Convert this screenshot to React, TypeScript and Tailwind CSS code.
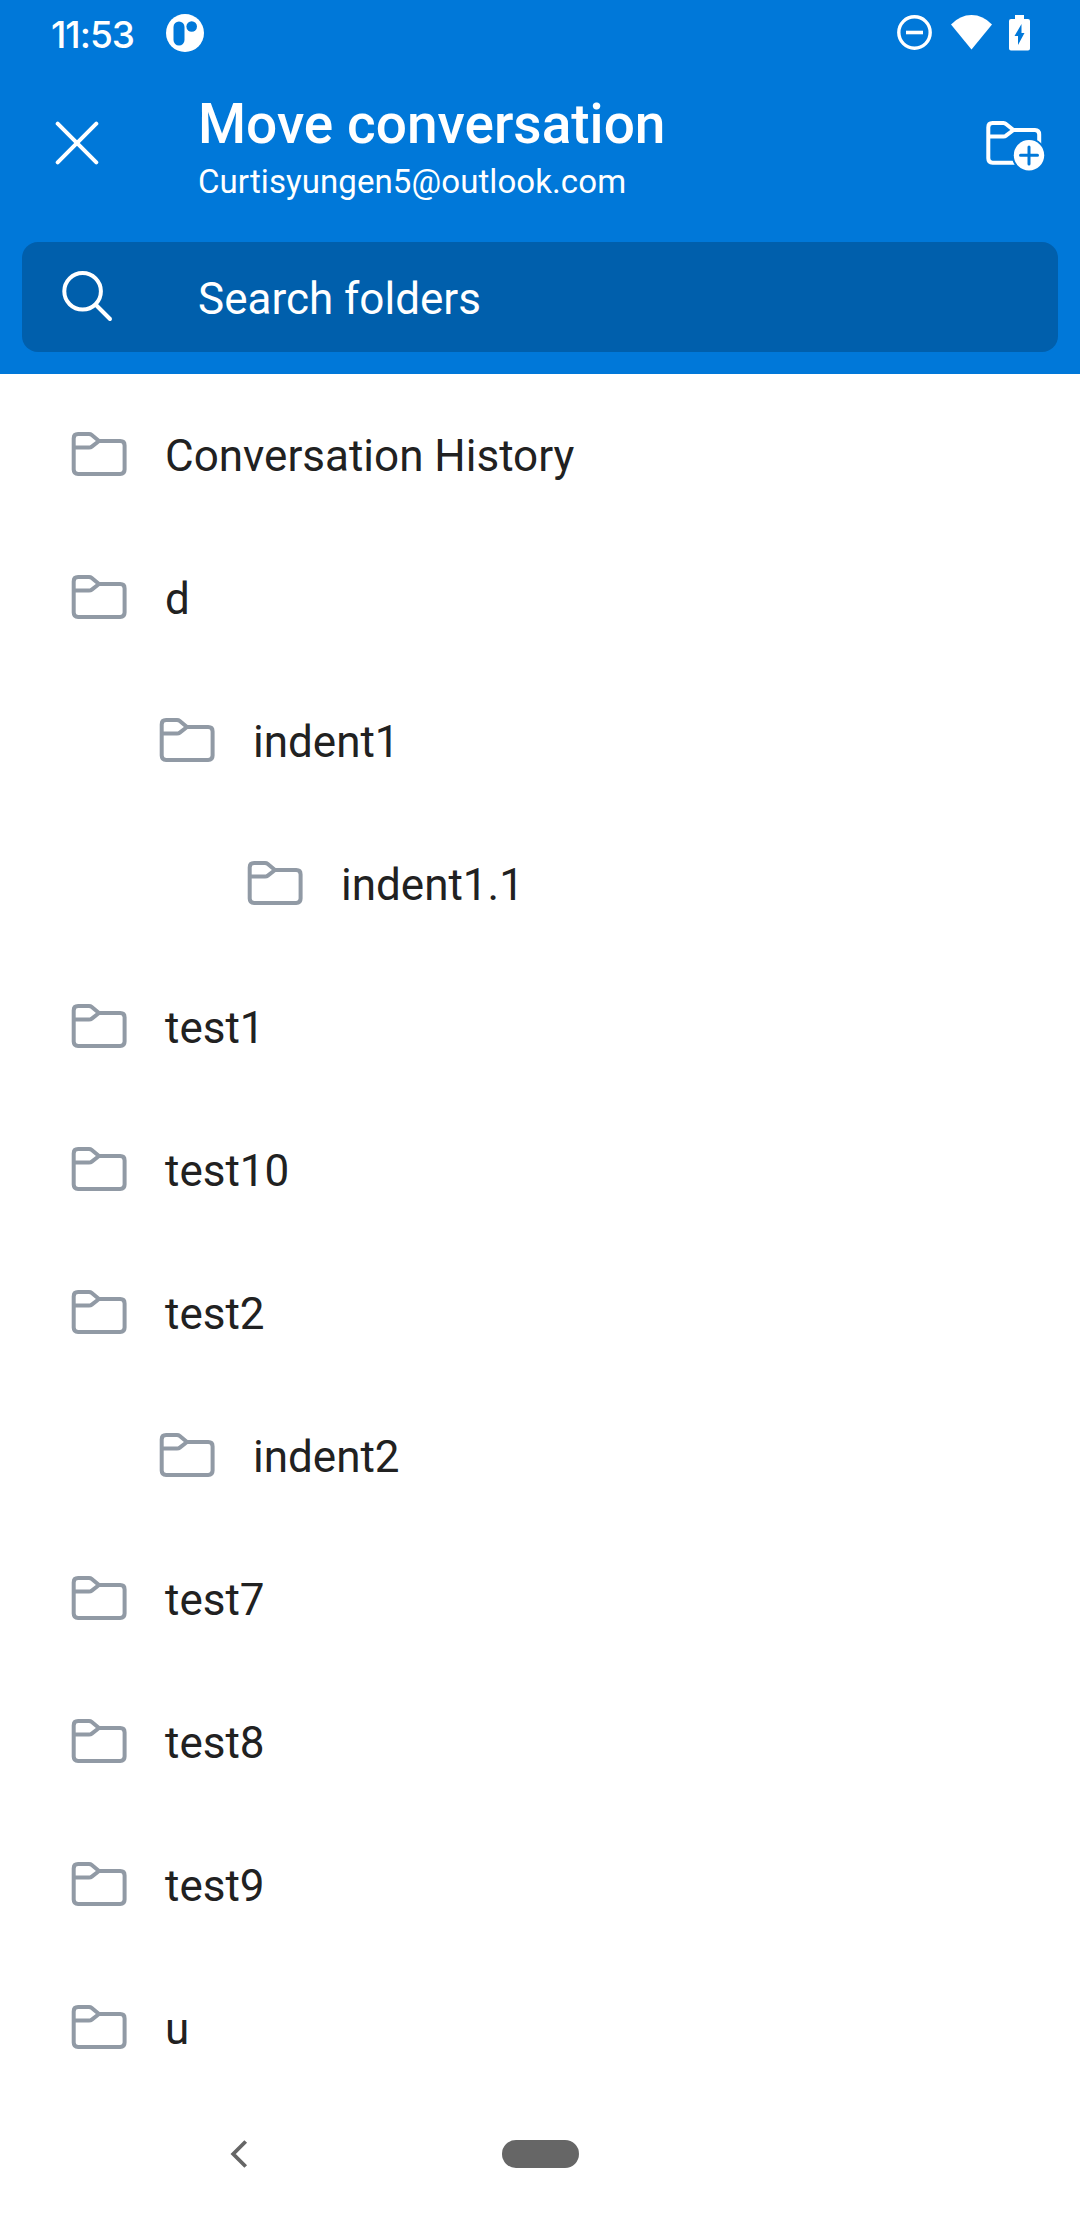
type Folder = { name: string; level: 0 | 1 | 2 };

const folders: Folder[] = [
  { name: "Conversation History", level: 0 },
  { name: "d", level: 0 },
  { name: "indent1", level: 1 },
  { name: "indent1.1", level: 2 },
  { name: "test1", level: 0 },
  { name: "test10", level: 0 },
  { name: "test2", level: 0 },
  { name: "indent2", level: 1 },
  { name: "test7", level: 0 },
  { name: "test8", level: 0 },
  { name: "test9", level: 0 },
  { name: "u", level: 0 },
];

const indent = { 0: "pl-[66px]", 1: "pl-[154px]", 2: "pl-[242px]" };

function FolderIcon() {
  return (
    <svg className="mb-px size-[66px] shrink-0" viewBox="0 0 66 66" fill="none" stroke="#919aa5" strokeWidth="4" strokeLinejoin="round">
      <path d="M33 20H54.2Q58.6 20 58.6 24.4V48.6Q58.6 53 54.2 53H12.1Q7.7 53 7.7 48.6V17.4Q7.7 13 12.1 13H23Q24.6 13 25.8 14L33 20L25.8 25.6Q24.6 26.6 23 26.6H7.7" />
    </svg>
  );
}

function StatusBar() {
  return (
    <div className="flex h-[66px] items-center justify-between pl-[51px] pr-[47px]">
      <div className="flex items-center">
        <span className="w-[115px] pt-[3px] font-['Inter',sans-serif] text-[37px] leading-[44px] font-medium tracking-[-1px]">11:53</span>
        <svg className="size-[38px]" viewBox="0 0 38 38">
          <circle cx="19" cy="19" r="19" fill="#fff" />
          <rect x="7.5" y="7.5" width="11" height="24" rx="5.5" fill="#0078d9" />
          <circle cx="25.7" cy="12.5" r="5.3" fill="#0078d9" />
        </svg>
      </div>
      <svg className="mb-[2px] h-[37px] w-[136px]" viewBox="897 14 136 37">
        <circle cx="914.5" cy="32.5" r="15.7" fill="none" stroke="#fff" strokeWidth="3.4" />
        <path d="M906 32.5H923" stroke="#fff" strokeWidth="3.6" />
        <path d="M951 24.5Q960 15 971.5 15T992 24.5L971.5 49.5Z" fill="#fff" />
        <path fillRule="evenodd" d="M1015 15H1024V19H1028Q1030 19 1030 21V48.5Q1030 50.5 1028 50.5H1011Q1009 50.5 1009 48.5V21Q1009 19 1011 19H1015ZM1021.5 24L1014.5 36H1018V45L1024.5 33H1021.5Z" fill="#fff" />
      </svg>
    </div>
  );
}

function Header() {
  return (
    <header className="h-[374px] shrink-0 bg-[#0078d9] text-white">
      <StatusBar />
      <div className="flex h-[176px] items-start pt-[26px]">
        <svg className="mt-[29px] ml-[55px] size-[44px]" viewBox="0 0 44 44" stroke="#fff" strokeWidth="4" strokeLinecap="round">
          <path d="M2.7 2.7L41.3 41.3M41.3 2.7L2.7 41.3" />
        </svg>
        <div className="ml-[99px] flex-1">
          <h1 className="text-[55px] leading-[64px] font-medium">Move conversation</h1>
          <p className="mt-[6px] text-[33px] leading-[40px] tracking-[0.09px]">Curtisyungen5@outlook.com</p>
        </div>
        <svg className="mt-[18px] mr-[35px] size-[66px]" viewBox="979 110 66 66" fill="none" stroke="#fff" strokeWidth="4" strokeLinejoin="round">
          <path d="M1039.2 145V134.5Q1039.2 130 1035 130H1013.5L1006 124Q1005 123 1003.5 123H992.6Q988.3 123 988.3 127.4V158.3Q988.3 162.7 992.6 162.7H1018M1013.5 130L1006 135.7Q1005 136.6 1003.5 136.6H988.3" />
          <circle cx="1029" cy="155.3" r="17.2" fill="#0078d9" stroke="none" />
          <circle cx="1029" cy="155.3" r="15.2" fill="#fff" stroke="none" />
          <path d="M1029 147V164M1020.5 155.3H1037.5" stroke="#0078d9" strokeWidth="3" strokeLinecap="round" />
        </svg>
      </div>
      <div className="mx-[22px] flex h-[110px] items-center rounded-[16px] bg-[#005fac]">
        <svg className="mb-[2px] ml-[38px] size-[54px]" viewBox="60 269 54 54" fill="none" stroke="#fff" strokeWidth="4" strokeLinecap="round">
          <circle cx="82.6" cy="291.3" r="18.3" />
          <path d="M96 305L110 319" />
        </svg>
        <span className="ml-[84px] pt-[4px] text-[44px] leading-[52px]">Search folders</span>
      </div>
    </header>
  );
}

export default function App() {
  return (
    <div className="flex h-[2220px] w-[1080px] flex-col overflow-hidden bg-white font-['Roboto',sans-serif]">
      <Header />
      <main className="min-h-0 flex-1 pt-[9px]">
        <ul>
          {folders.map(({ name, level }) => (
            <li key={name} className={`flex h-[143px] items-center gap-[33px] ${indent[level]}`}>
              <FolderIcon />
              <span className="pt-[3px] text-[44px] leading-[52px] text-[#212121]">{name}</span>
            </li>
          ))}
        </ul>
      </main>
      <nav className="flex h-[132px] shrink-0 items-center pl-[230px]">
        <svg className="h-[28px] w-[18px]" viewBox="0 0 18 28" fill="none" stroke="#666" strokeWidth="3.8">
          <path d="M15.7 1.5L3.2 14L15.7 26.5" />
        </svg>
        <span className="ml-[254px] h-[28px] w-[77px] rounded-full bg-[#666]" />
      </nav>
    </div>
  );
}
